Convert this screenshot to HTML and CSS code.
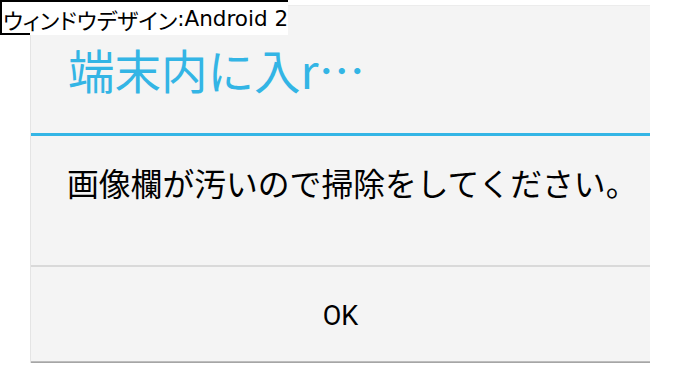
FILE: index.html
```html
<!DOCTYPE html>
<html lang="ja">
<head>
<meta charset="utf-8">
<link rel="stylesheet" href="styles.css">
</head>
<body>
<div class="caption"><span class="kana">ウィンドウデザイン</span><span class="latin">:Android 2</span></div>
<div class="dialog">
  <div class="title">端末内に入r…</div>
  <div class="accent"></div>
  <div class="message">画像欄が汚いので掃除をしてください。</div>
  <div class="divider"></div>
  <div class="button">OK</div>
</div>
</body>
</html>
```

FILE: styles.css
```css
html, body {
  margin: 0;
  padding: 0;
  background: #ffffff;
}
body {
  width: 680px;
  height: 368px;
  padding: 5px 30px 0 30px;
  box-sizing: border-box;
  position: relative;
  font-family: "Noto Sans CJK JP", "Noto Sans", sans-serif;
}
.caption {
  position: absolute;
  left: 0;
  top: 0;
  width: 288px;
  height: 35px;
  box-sizing: border-box;
  background: #ffffff;
  border-top: 2px solid #000;
  border-left: 2px solid #000;
  padding-left: 1px;
  padding-top: 1px;
  z-index: 2;
  display: flex;
  align-items: center;
  white-space: nowrap;
  color: #000;
}
.caption::after {
  content: "";
  position: absolute;
  left: -2px;
  bottom: 0;
  width: 30px;
  height: 2px;
  background: #000;
}
.kana {
  font-family: "Noto Sans CJK JP", sans-serif;
  font-size: 22px;
  font-feature-settings: "palt";
  line-height: 1;
}
.latin {
  font-family: "DejaVu Sans", sans-serif;
  font-size: 21.5px;
  line-height: 1;
}
.dialog {
  width: 620px;
  height: 358px;
  background: #f4f4f4;
  display: flex;
  flex-direction: column;
  border-left: 1px solid #e4e4e4;
  border-top: 1px solid #ececec;
  box-sizing: border-box;
  position: relative;
}
.dialog::after {
  content: "";
  position: absolute;
  left: 0;
  right: 0;
  bottom: 0;
  height: 2px;
  background: linear-gradient(#c8c8c8, #9a9a9a);
}
.title {
  height: 127px;
  display: flex;
  align-items: center;
  padding-left: 37px;
  font-size: 46.5px;
  color: #33b5e5;
  line-height: 1;
}
.accent {
  height: 3px;
  background: #33b5e5;
}
.message {
  height: 129px;
  box-sizing: border-box;
  padding: 23px 0 0 36px;
  font-size: 31.8px;
  line-height: 1.45;
  color: #000;
  white-space: nowrap;
}
.divider {
  height: 2px;
  background: #d9d9d9;
}
.button {
  flex: 1;
  display: flex;
  align-items: center;
  justify-content: center;
  padding-top: 4px;
  padding-bottom: 2px;
  font-family: Roboto, sans-serif;
  font-size: 27px;
  color: #000;
}
```
